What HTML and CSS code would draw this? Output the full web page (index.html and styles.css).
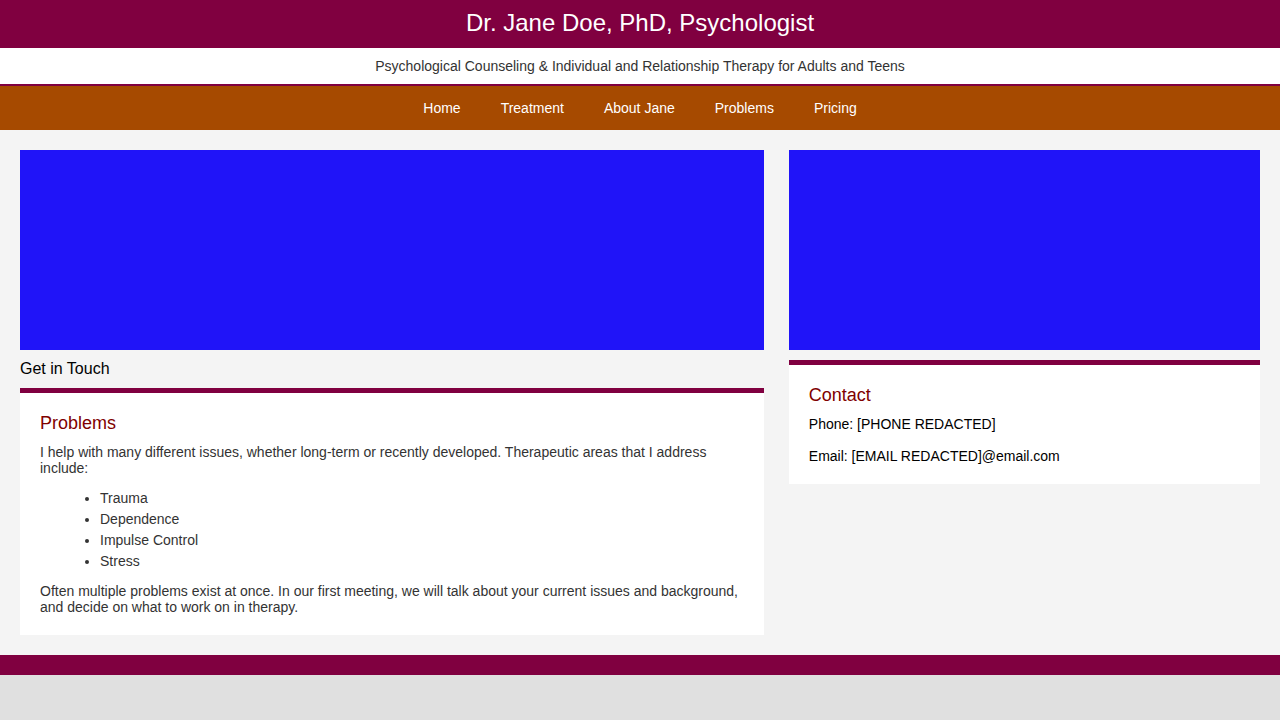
FILE: index.html
```html
<!DOCTYPE html>
<html lang="en">
<head>
<meta charset="utf-8">
<title>Dr. Jane Doe, PhD, Psychologist</title>
<link rel="stylesheet" href="styles.css">
</head>
<body>
<header class="site-header">
  <h1 class="site-title">Dr. Jane Doe, PhD, Psychologist</h1>
</header>
<div class="tagline">Psychological Counseling &amp; Individual and Relationship Therapy for Adults and Teens</div>
<nav class="main-nav">
  <a href="#">Home</a>
  <a href="#">Treatment</a>
  <a href="#">About Jane</a>
  <a href="#">Problems</a>
  <a href="#">Pricing</a>
</nav>
<main class="content">
  <section class="col col-main">
    <div class="media"></div>
    <div class="caption">Get in Touch</div>
    <article class="card">
      <h2 class="card-title">Problems</h2>
      <p class="intro">I help with many different issues, whether long-term or recently developed. Therapeutic areas that I address include:</p>
      <ul class="list">
        <li>Trauma</li>
        <li>Dependence</li>
        <li>Impulse Control</li>
        <li>Stress</li>
      </ul>
      <p>Often multiple problems exist at once. In our first meeting, we will talk about your current issues and background, and decide on what to work on in therapy.</p>
    </article>
  </section>
  <aside class="col col-side">
    <div class="media"></div>
    <article class="card card-contact">
      <h2 class="card-title">Contact</h2>
      <p class="phone">Phone: [PHONE REDACTED]</p>
      <p>Email: [EMAIL REDACTED]@email.com</p>
    </article>
  </aside>
</main>
<footer class="site-footer"></footer>
</body>
</html>
```
FILE: styles.css
```css
* { box-sizing: border-box; }
html, body {
  margin: 0;
  padding: 0;
}
body {
  background: #e0e0e0;
  font-family: "Liberation Sans", Arial, sans-serif;
  color: #000;
}
.site-header {
  background: #800040;
  height: 48px;
  display: flex;
  align-items: center;
  justify-content: center;
}
.site-title {
  margin: 0;
  font-size: 24px;
  font-weight: normal;
  color: #fff;
  line-height: 1;
  padding-bottom: 2px;
}
.tagline {
  background: #fff;
  height: 38px;
  border-bottom: 2px solid #800040;
  display: flex;
  align-items: center;
  justify-content: center;
  font-size: 14px;
  color: #333;
}
.main-nav {
  background: #a64a00;
  height: 44px;
  display: flex;
  align-items: center;
  justify-content: center;
}
.main-nav a {
  color: #fff;
  text-decoration: none;
  font-size: 14px;
  padding: 0 20px;
}
.content {
  background: #f4f4f4;
  padding: 20px;
  display: flex;
  justify-content: space-between;
  align-items: flex-start;
}
.col-main { width: 60%; }
.col-side { width: 38%; }
.media {
  background: #2014f8;
  height: 200px;
}
.caption {
  font-size: 16px;
  padding: 10px 0;
  line-height: 18px;
}
.card {
  background: #fff;
  border-top: 5px solid #800040;
  padding: 20px;
  font-size: 14px;
  color: #333;
}
.col-side .card { margin-top: 10px; color: #000; }
.card-title {
  margin: 0 0 10px;
  font-size: 18px;
  font-weight: normal;
  color: #800000;
  line-height: 21px;
}
.card p {
  margin: 0;
  line-height: 16px;
}
.list {
  margin: 12px 0 11px;
  padding-left: 60px;
}
.list li {
  line-height: 21px;
}
.card-contact .phone { margin-bottom: 16px; }
.site-footer {
  background: #800040;
  height: 20px;
}
```
